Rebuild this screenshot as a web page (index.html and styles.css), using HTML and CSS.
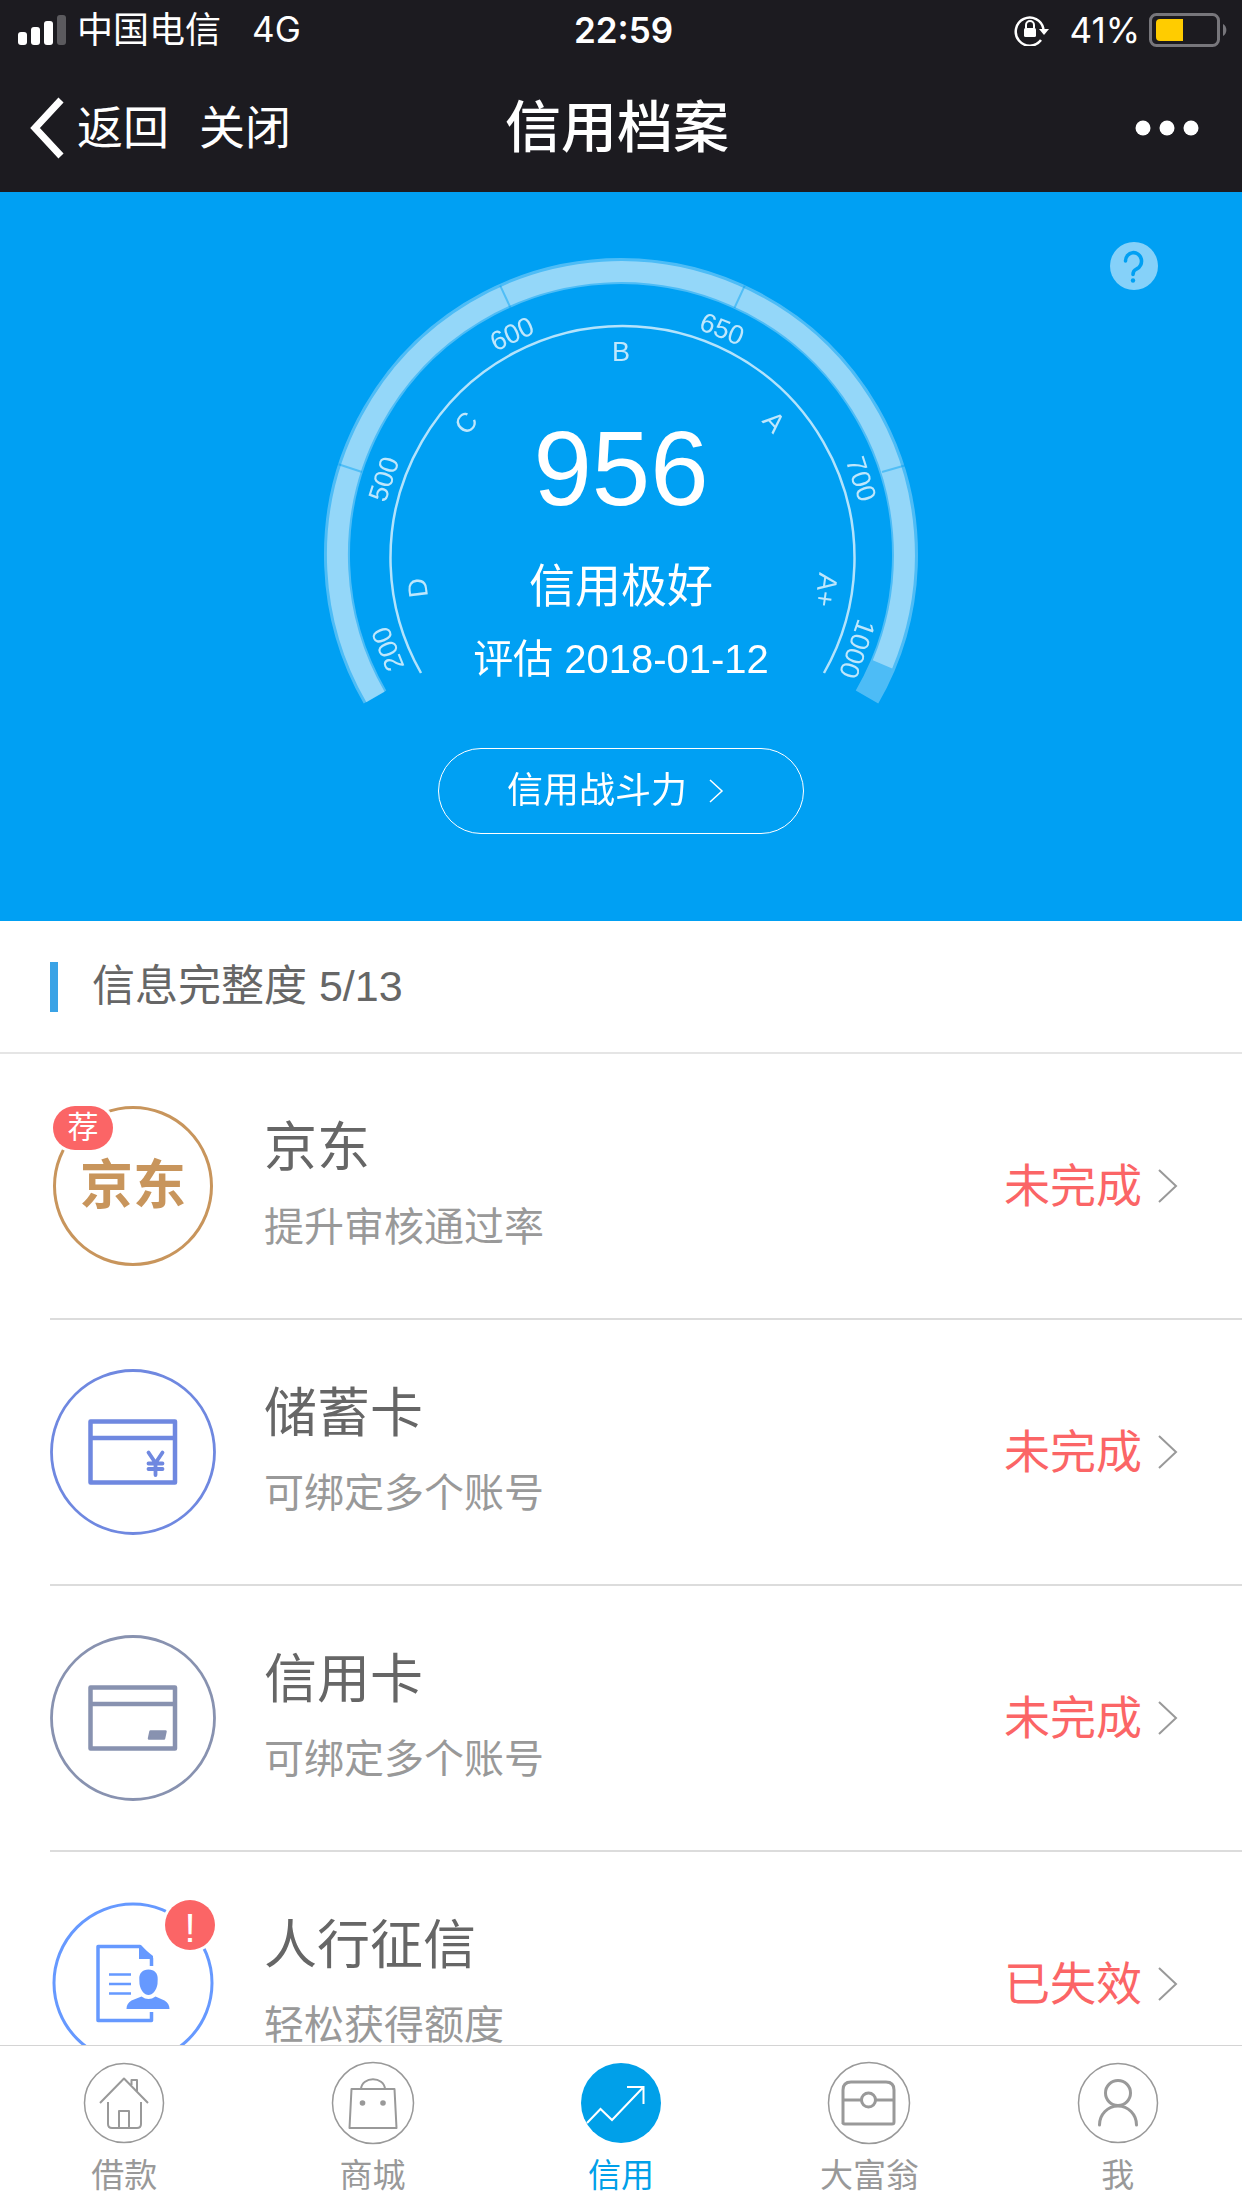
FILE: index.html
```html
<!DOCTYPE html>
<html lang="zh-CN">
<head>
<meta charset="utf-8">
<meta name="viewport" content="width=device-width, initial-scale=1">
<title>信用档案</title>
<link rel="stylesheet" href="styles.css">
</head>
<body>
<header class="top">
  <div class="status">
    <div class="status-side">
      <svg class="signal" width="50" height="32" viewBox="0 0 50 32" aria-hidden="true">
        <rect x="0" y="18" width="9" height="13" rx="3"/><rect x="13" y="13" width="9" height="18" rx="3"/><rect x="26" y="7" width="9" height="24" rx="3"/><rect x="39" y="1" width="9" height="30" rx="3" opacity=".28"/>
      </svg>
      <span class="carrier">中国电信</span>
      <span>4G</span>
    </div>
    <span class="clock">22:59</span>
    <div class="status-side status-right">
      <svg width="36" height="32" viewBox="0 0 36 32" aria-hidden="true">
        <path d="M27 26A14 14 0 1 1 29.500 15" fill="none" stroke="#fff" stroke-width="2.500"/>
        <path d="M25 15h10l-5 6z" fill="#fff"/>
        <rect x="10" y="14" width="12" height="9" rx="1.500" fill="#fff"/>
        <path d="M12 14v-3a4 4 0 0 1 8 0v3" fill="none" stroke="#fff" stroke-width="2"/>
      </svg>
      <span class="percent">41%</span>
      <svg width="80" height="36" viewBox="0 0 80 36" aria-hidden="true">
        <rect x="1.500" y="2.500" width="68" height="31" rx="6" fill="none" stroke="#77767b" stroke-width="3"/>
        <path d="M11 7H34V29H11a4 4 0 0 1-4-4V11a4 4 0 0 1 4-4z" fill="#fc0"/>
        <path d="M74 12a7 7 0 0 1 0 12z" fill="#77767b"/>
      </svg>
    </div>
  </div>
  <nav class="nav">
    <div class="nav-left">
      <button class="nav-btn back" type="button">
        <svg width="36" height="62" viewBox="0 0 36 62" aria-hidden="true"><path d="M32 3L6 31l26 28" fill="none" stroke="#fff" stroke-width="7"/></svg>返回
      </button>
      <button class="nav-btn" type="button">关闭</button>
    </div>
    <h1 class="title">信用档案</h1>
    <button class="nav-btn more" type="button" aria-label="更多">
      <svg width="70" height="20" viewBox="0 0 70 20" aria-hidden="true"><g fill="#fff"><circle cx="8" cy="10" r="7.500"/><circle cx="32" cy="10" r="7.500"/><circle cx="56" cy="10" r="7.500"/></g></svg>
    </button>
  </nav>
</header>

<main class="scroll">
  <section class="hero">
    <button class="help" type="button" aria-label="帮助">
      <svg width="48" height="50" viewBox="0 0 48 50" aria-hidden="true">
        <circle cx="24" cy="25" r="24" fill="#fff" opacity=".52"/>
        <path d="M15.500 20a8 8.500 0 1 1 11 8c-2.500 1.200-3.500 2.500-3.500 5.500" fill="none" stroke="#00a0f3" stroke-width="3.600" stroke-linecap="round"/><circle cx="23" cy="39.500" r="2.200" fill="#00a0f3"/>
      </svg>
    </button>
    <div class="gauge">
      <svg class="dial" viewBox="322 256 598 452" aria-hidden="true">
        <g fill="none" stroke="#fff">
          <path d="M375 697A284 284 0 1 1 867 697" stroke-width="26" opacity=".3"/>
          <path d="M375.500 697A283.500 283.500 0 1 1 882.500 664.400" stroke-width="21" opacity=".4"/>
          <path d="M421 673A232 232 0 1 1 824 673" stroke-width="2.500" opacity=".7"/>
        </g>
        <g stroke="#00a0f3" stroke-width="2" opacity=".45">
          <path d="M338.500 464.200L362 472"/><path d="M500.200 285.700L510.600 308"/><path d="M744.800 285.700L734.400 308"/><path d="M905.500 465.200L882 472"/>
        </g>
        <g class="scale">
          <text transform="translate(388 649) rotate(-112)" dy="9">200</text>
          <text transform="translate(384 479) rotate(-72)" dy="9">500</text>
          <text transform="translate(512 334) rotate(-25)" dy="9">600</text>
          <text transform="translate(722 329) rotate(22)" dy="9">650</text>
          <text transform="translate(861 479) rotate(72)" dy="9">700</text>
          <text transform="translate(857 649) rotate(109)" dy="9">1000</text>
          <text transform="translate(418 588) rotate(-97)" dy="9">D</text>
          <text transform="translate(466 423) rotate(-48)" dy="9">C</text>
          <text transform="translate(621 352)" dy="9">B</text>
          <text transform="translate(774 422) rotate(48)" dy="9">A</text>
          <text transform="translate(826 590) rotate(98)" dy="9">A+</text>
        </g>
      </svg>
      <div class="readout">
        <strong class="score">956</strong>
        <span class="level">信用极好</span>
        <span class="date">评估 2018-01-12</span>
      </div>
    </div>
    <button class="power" type="button">信用战斗力
      <svg width="16" height="26" viewBox="0 0 16 26" aria-hidden="true"><path d="M2 2l12 11L2 24" fill="none" stroke="#fff" stroke-width="1.500"/></svg>
    </button>
  </section>

  <h2 class="section-title">信息完整度 5/13</h2>

  <ul class="list">
    <li><a class="row" href="#jd">
      <span class="icon jd">
        <span class="ring">京东</span>
        <span class="badge badge-tag">荐</span>
      </span>
      <span class="info"><span class="name">京东</span><span class="desc">提升审核通过率</span></span>
      <span class="state">未完成</span>
      <svg class="arrow" width="20" height="36" viewBox="0 0 20 36" aria-hidden="true"><path d="M1 2l17 16L1 34"/></svg>
    </a></li>
    <li><a class="row" href="#debit">
      <svg class="icon" viewBox="0 0 166 166" fill="none" stroke="#6f88e0" stroke-width="4.500" stroke-linejoin="round" aria-hidden="true">
        <circle cx="83" cy="83" r="81.500" stroke-width="2.800"/>
        <path d="M40.500 52.500h84.500v61h-84.500zM40.500 69h84.500"/>
        <path d="M98.500 83.500l7 10.500 7-10.500M105.500 94v12M98.500 94.500h14M98.500 100h14" stroke-width="3.800" stroke-linecap="round"/>
      </svg>
      <span class="info"><span class="name">储蓄卡</span><span class="desc">可绑定多个账号</span></span>
      <span class="state">未完成</span>
      <svg class="arrow" width="20" height="36" viewBox="0 0 20 36" aria-hidden="true"><path d="M1 2l17 16L1 34"/></svg>
    </a></li>
    <li><a class="row" href="#credit">
      <svg class="icon" viewBox="0 0 166 166" fill="none" stroke="#8892b0" stroke-width="4.500" stroke-linejoin="round" aria-hidden="true">
        <circle cx="83" cy="83" r="81.500" stroke-width="2.800"/>
        <path d="M40.500 52.500h84.500v61h-84.500zM40.500 69h84.500"/>
        <path d="M100.500 96.500h15l-1.500 7h-15z" fill="#8892b0" stroke-width="2.500"/>
      </svg>
      <span class="info"><span class="name">信用卡</span><span class="desc">可绑定多个账号</span></span>
      <span class="state">未完成</span>
      <svg class="arrow" width="20" height="36" viewBox="0 0 20 36" aria-hidden="true"><path d="M1 2l17 16L1 34"/></svg>
    </a></li>
    <li><a class="row" href="#pboc">
      <span class="icon">
        <svg width="166" height="166" viewBox="0 0 166 166" aria-hidden="true">
          <g fill="none" stroke="#6699ff">
            <circle cx="83" cy="82" r="79" stroke-width="3"/>
            <path d="M101.500 65V57.500L90 45.500H48v74h53.500V111" stroke-width="3.500" stroke-linejoin="round"/>
            <path d="M59 73.500h22M59 83h22M59 92.500h22" stroke-width="2.500"/>
          </g>
          <g fill="#6699ff">
            <path d="M89 44v14h14V55z"/>
            <path d="M98.500 68.500c6 0 9.500 4 9.200 9.500l-.2 5c-1 6.500-5 11-9 11s-8-4.500-9-11l-.2-5c-.3-5.500 3.200-9.500 9.200-9.500z"/>
            <path d="M91.500 95.500q7 5 14 0l9 4c3.500 2 5 5 5 8.500H76.500c0-3.500 1.500-6.500 5-8.500z"/>
          </g>
        </svg>
        <span class="badge badge-alert">!</span>
      </span>
      <span class="info"><span class="name">人行征信</span><span class="desc">轻松获得额度</span></span>
      <span class="state">已失效</span>
      <svg class="arrow" width="20" height="36" viewBox="0 0 20 36" aria-hidden="true"><path d="M1 2l17 16L1 34"/></svg>
    </a></li>
  </ul>
</main>

<nav class="tabs">
  <a class="tab" href="#loan">
    <svg viewBox="0 0 84 84" aria-hidden="true"><circle cx="42" cy="42" r="39.500" stroke-width="1.500"/><path d="M18 42L42 17.500 66 42M49.500 24v-5h5.500v11M26 41v22q0 4 4 4h25q4 0 4-4V41M37 67V50h10v17"/></svg>
    <span>借款</span>
  </a>
  <a class="tab" href="#mall">
    <svg viewBox="0 0 84 84" aria-hidden="true"><circle cx="42" cy="42" r="40.500" stroke-width="1.500"/><path d="M20.500 28h43l2 39H18.500zM30 28c1-13 23-13 24 0"/><circle class="dot" cx="31.500" cy="42" r="2.800"/><circle class="dot" cx="52" cy="42" r="2.800"/></svg>
    <span>商城</span>
  </a>
  <a class="tab tab-on" href="#profile" aria-current="page">
    <svg viewBox="0 0 84 84" aria-hidden="true"><circle cx="42" cy="42" r="40" fill="#00a0e9" stroke="none"/><path d="M8 62l13.500-14L33 59l31.500-33M48 26h16.500v17"/></svg>
    <span>信用</span>
  </a>
  <a class="tab" href="#game">
    <svg viewBox="0 0 84 84" aria-hidden="true"><circle cx="42" cy="42" r="40.500" stroke-width="1.500"/><path class="bold" d="M16 63V29q0-8 8-8h35q8 0 8 8v32q0 2-2 2H18q-2 0-2-2M16 39h18M49 39h18"/><circle class="bold" cx="41.500" cy="39" r="7"/></svg>
    <span>大富翁</span>
  </a>
  <a class="tab" href="#me">
    <svg viewBox="0 0 84 84" aria-hidden="true"><circle cx="42" cy="42" r="39.500" stroke-width="1.500"/><circle class="bold" cx="42" cy="32" r="12.500"/><path class="bold" stroke-linecap="round" d="M23.500 64a18.500 19 0 0 1 37 0"/></svg>
    <span>我</span>
  </a>
</nav>
</body>
</html>
```
FILE: styles.css
```css
* { box-sizing: border-box; }

body {
  margin: 0;
  height: 100vh;
  display: flex;
  flex-direction: column;
  background: #fff;
  color: #666;
  font-family: "Liberation Sans", "Noto Sans CJK SC", sans-serif;
  font-weight: 400;
  line-height: 1.4;
}

svg { display: block; flex: none; }
a { color: inherit; text-decoration: none; }
button {
  margin: 0;
  padding: 0;
  border: 0;
  background: none;
  color: inherit;
  font: inherit;
  cursor: pointer;
}

/* header */
.top { flex: none; background: #1c1b20; color: #fff; }

.status {
  display: grid;
  grid-template-columns: 1fr auto 1fr;
  align-items: center;
  height: 60px;
  padding: 0 13px 0 18px;
  font-family: Inter, "Noto Sans CJK SC", sans-serif;
  font-size: 35px;
}
.status-side { display: flex; align-items: center; }
.status-right { justify-content: flex-end; }
.signal { margin-right: 9px; fill: #fff; }
.carrier { margin-right: 31px; font-size: 36px; }
.clock { font-weight: 600; }
.percent { margin: 0 9px 0 19px; }

.nav {
  display: grid;
  grid-template-columns: 1fr auto 1fr;
  align-items: center;
  height: 132px;
  padding: 4px 37px 0 29px;
}
.nav-left { display: flex; gap: 30px; }
.nav-btn { display: flex; align-items: center; gap: 12px; font-size: 46px; line-height: 64px; }
.title { margin: 0; font-size: 56px; line-height: 72px; font-weight: 500; }
.more { justify-self: end; }

/* scrolling content */
.scroll { flex: 1; min-height: 0; overflow-y: auto; scrollbar-width: none; }

.hero {
  position: relative;
  display: flex;
  flex-direction: column;
  align-items: center;
  gap: 40px;
  padding: 64px 0 87px;
  background: #00a0f3;
  color: #fff;
}
.help { position: absolute; top: 49px; right: 84px; }
.gauge { display: grid; width: 598px; max-width: 100%; }
.dial, .readout { grid-area: 1 / 1; }
.dial { width: 100%; }
.scale { fill: #fff; opacity: .75; font-size: 27px; text-anchor: middle; }
.readout { display: flex; flex-direction: column; align-items: center; padding-top: 160px; }
.score { font-size: 105px; line-height: 105px; font-weight: 400; }
.level { margin-top: 33px; font-size: 46px; line-height: 64px; }
.date { margin-top: 13px; font-size: 40px; line-height: 56px; }
.power {
  display: flex;
  align-items: center;
  justify-content: center;
  gap: 21px;
  width: 366px;
  height: 86px;
  padding-right: 11px;
  border: 1px solid #fff;
  border-radius: 43px;
  font-size: 36px;
}

.section-title {
  display: flex;
  align-items: center;
  gap: 34px;
  height: 133px;
  margin: 0;
  padding-left: 50px;
  border-bottom: 2px solid #e5e5e5;
  font-size: 43px;
  font-weight: 400;
}
.section-title::before { content: ""; width: 8px; height: 50px; background: #3aa3e6; }

.list { margin: 0; padding: 0 0 0 50px; list-style: none; }
.row {
  display: flex;
  align-items: center;
  height: 266px;
  padding-right: 64px;
  border-bottom: 2px solid #dcdcdc;
}
.icon { position: relative; flex: none; width: 166px; height: 166px; margin-right: 48px; }
.jd { display: grid; place-items: center; }
.ring {
  display: grid;
  place-items: center;
  width: 160px;
  height: 160px;
  border: 3px solid #c8955c;
  border-radius: 50%;
  color: #c8955c;
  font-size: 53px;
  font-weight: 700;
}
.badge {
  position: absolute;
  display: grid;
  place-items: center;
  background: #fb6566;
  box-shadow: 0 0 0 3px #fff;
  color: #fff;
}
.badge-tag { top: 3px; left: 3px; width: 60px; height: 44px; border-radius: 22px; font-size: 31px; }
.badge-alert { top: -1px; right: 1px; width: 50px; height: 50px; border-radius: 50%; font-size: 40px; }
.info { flex: 1; display: flex; flex-direction: column; padding-top: 3px; }
.name { font-size: 53px; line-height: 78px; }
.desc { font-size: 40px; line-height: 80px; color: #999; }
.state { margin-right: 16px; font-size: 46px; color: #fb6566; }
.arrow path { fill: none; stroke: #999; stroke-width: 2; }

/* bottom tabs */
.tabs {
  flex: none;
  display: grid;
  grid-template-columns: repeat(5, 1fr);
  height: 163px;
  padding-top: 15px;
  border-top: 1px solid #d4d4d4;
  background: #fff;
}
.tab {
  display: flex;
  flex-direction: column;
  align-items: center;
  gap: 8px;
  color: #999;
  font-size: 33px;
  line-height: 46px;
}
.tab svg { width: 84px; height: 84px; fill: none; stroke: #999; stroke-width: 2; stroke-linejoin: round; }
.tab .bold { stroke-width: 3; }
.tab .dot { fill: #999; stroke: none; }
.tab-on { color: #00a0e9; }
.tab-on svg { stroke: #fff; stroke-linejoin: miter; }
```
